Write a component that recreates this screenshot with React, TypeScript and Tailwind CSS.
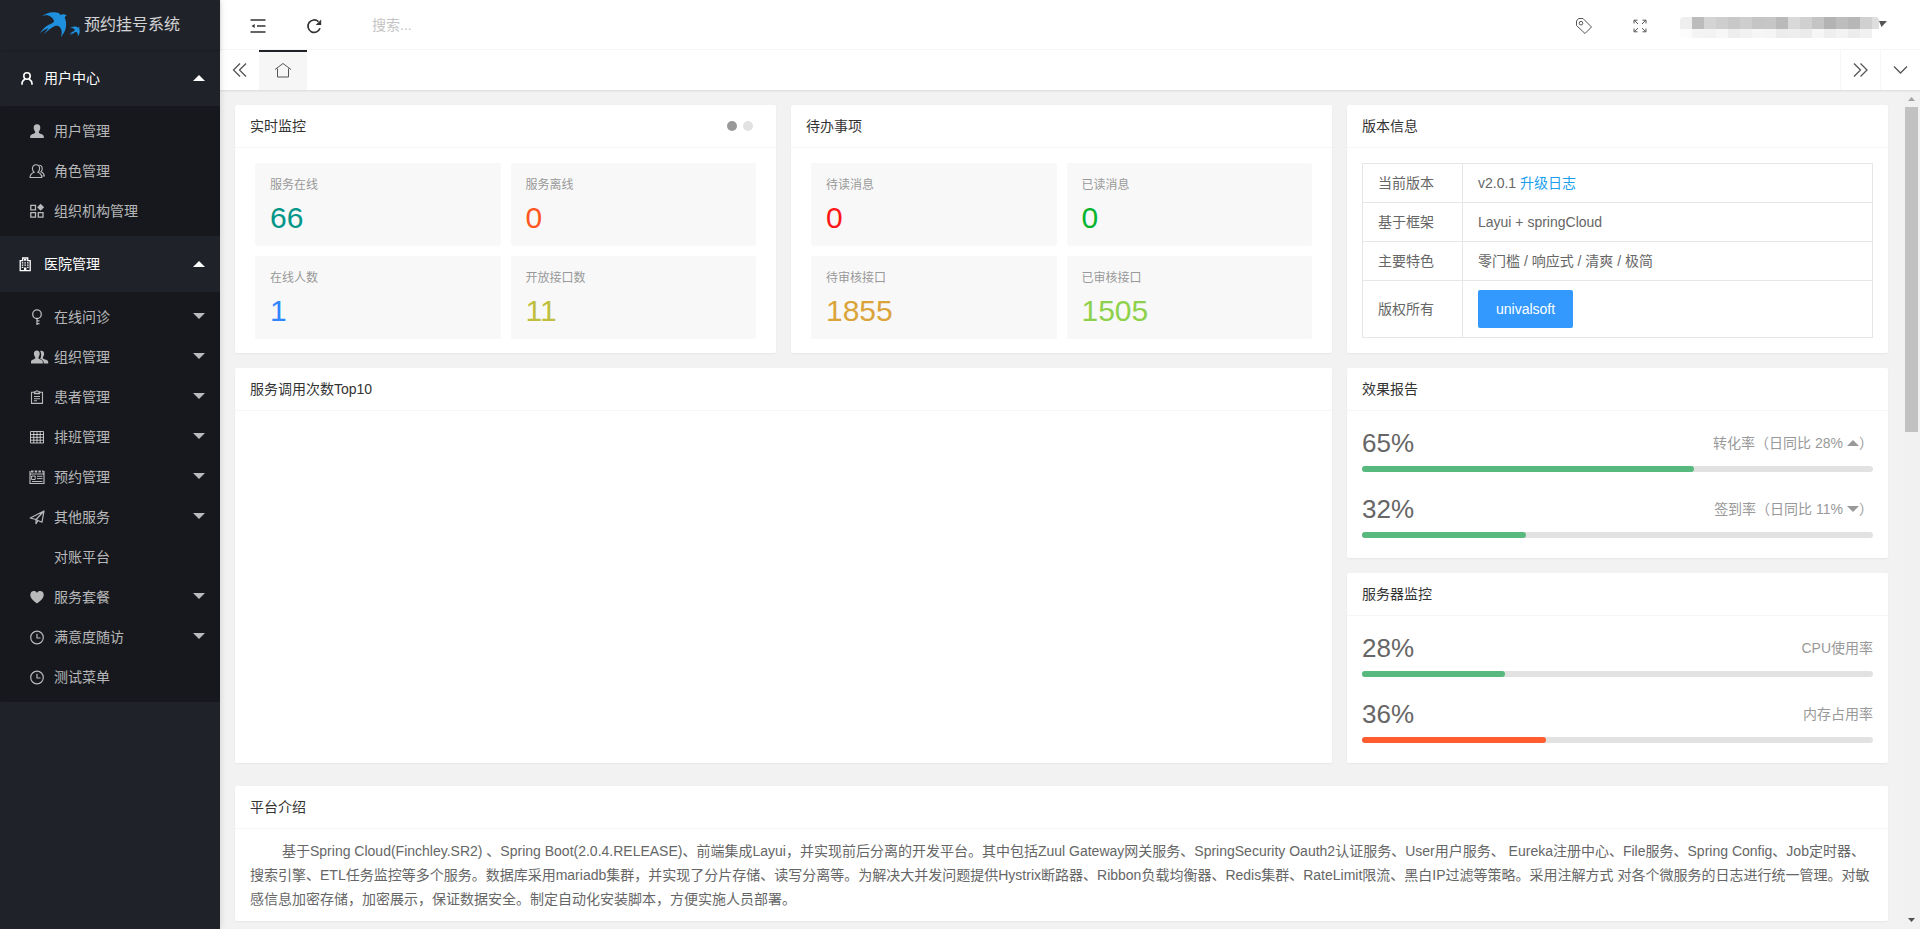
import type { ReactNode } from 'react';

const stroke = { fill: 'none', stroke: 'currentColor', strokeWidth: 1 } as const;

// All menu icons share a 16x16 grid
const icons: Record<string, ReactNode> = {
  person: (
    <g {...stroke} strokeWidth={1.6}>
      <circle cx="9" cy="6" r="3.2" />
      <path d="M4 14.800v-1.200q0-2.600 3-4.600M14 14.800v-1.200q0-2.600-3-4.600" />
    </g>
  ),
  hospital: (
    <g>
      <path {...stroke} strokeWidth={1.3} d="M2.200 14.600V4.600h2.500V2h5v2.600h2.500v10z" />
      <path fill="currentColor" d="M6 2.900h2.400v1.800H6zM3.800 6.200h1.500v1.300H3.800zM6.400 6.200h1.500v1.300H6.400zM9.100 6.200h1.500v1.300H9.100zM3.800 8.500h1.500v1.300H3.800zM6.400 8.500h1.500v1.300H6.400zM9.100 8.500h1.500v1.300H9.100zM3.800 10.800h1.500v1.300H3.800zM9.100 10.800h1.500v1.300H9.100zM6 11.600h2.400v3H6z" />
    </g>
  ),
  user: (
    <path fill="currentColor" d="M8 1.200c2.300 0 3.500 1.600 3.300 3.800-.1 1.600-.7 2.600-1.400 3.400v1.500c1.600 1 4.900 1.500 4.900 3.400V15H1.200v-1.700c0-1.900 3.300-2.400 4.900-3.400V8.400C5.400 7.600 4.800 6.600 4.700 5 4.500 2.800 5.700 1.200 8 1.200z" />
  ),
  role: (
    <g {...stroke} strokeWidth={1.1}>
      <path d="M7 1.800c2.200 0 3.600 1.500 3.600 3.800 0 1.700-.7 2.900-1.700 3.700 2 .8 3.900 2 3.900 5.200H1c0-3.200 2.100-4.400 4.100-5.200-1-.8-1.700-2-1.700-3.700 0-2.300 1.400-3.800 3.600-3.800z" />
      <path d="M10.400 2.200c1.700.2 2.900 1.500 2.800 3.600 0 1.300-.5 2.300-1.300 3 1.800.7 3.300 1.700 3.400 4.200h-2" />
    </g>
  ),
  blocks: (
    <g>
      <path {...stroke} strokeWidth={1.3} d="M1.800 2.300h4.700v4.500H1.800zM1.800 9.700h4.700v4.500H1.800zM9.300 9.700H14v4.500H9.300z" />
      <path fill="currentColor" d="M11.600.8l3.500 3.500-3.500 3.500-3.500-3.500z" />
    </g>
  ),
  key: (
    <g {...stroke} strokeWidth={1.3}>
      <circle cx="8" cy="5.200" r="4.300" />
      <path d="M8 9.500V16M8 11.800h2.500M8 14.600h2.500" />
    </g>
  ),
  group: (
    <g fill="currentColor">
      <path d="M7.800 1.600c2 0 3 1.400 2.900 3.400-.1 1.400-.6 2.400-1.200 3v1.600c1.500.9 4.300 1.400 4.300 3.200v1.700H2v-1.700c0-1.800 2.700-2.300 4.200-3.200V8c-.6-.6-1.200-1.600-1.300-3-.1-2 .9-3.400 2.900-3.400z" />
      <path d="M11.200 2c2.300-.6 4 .8 3.900 3-.1 1.400-.6 2.300-1.200 2.900v1.700c1.500.9 5.300 1.500 5.300 3.200v1.700h-4.500c.2-2.700-1.200-3.800-3.500-4.800 1.300-2.200 1.400-5.300 0-7.700z" />
    </g>
  ),
  clipboard: (
    <g {...stroke} strokeWidth={1.1}>
      <path d="M5 3.200H2.500v11.200h11V3.200H11" />
      <path d="M5.400 4.600V2.900h1.400a1.200 1.200 0 0 1 2.400 0h1.400v1.700zM5 7.500h6M5 9.700h6M5 11.800h3" />
    </g>
  ),
  grid: (
    <path {...stroke} d="M1.500 2.500h13v11.500h-13zM1.500 5.500h13M1.500 8.300h13M1.500 11.200h13M4.800 2.500V14M8 2.500V14M11.200 2.500V14" />
  ),
  card: (
    <g {...stroke}>
      <path strokeWidth={1.2} d="M1 2v12.500h14V2" />
      <path strokeWidth={2} strokeDasharray="2.500 1.200" d="M2 2.500h12.500" />
      <path d="M1 5h14M2.600 7h3.600v3.500H2.600zM8 7.300h5.500M8 9.600h5.500M3 12.500h10.500" />
    </g>
  ),
  plane: (
    <path {...stroke} strokeWidth={1.2} strokeLinejoin="round" d="M1.200 9L15 2l-2 11.200-4-1.700-2 3.200v-4.200L1.200 9zM7 10.500L15 2M9 11.500l-2-1" />
  ),
  heart: (
    <path fill="currentColor" d="M8 14.400C4.500 12 1.300 9 1.300 5.900c0-2.200 1.500-3.900 3.500-3.900C6.200 2 7.400 2.600 8 3.900 8.600 2.600 9.800 2 11.200 2c2 0 3.500 1.700 3.500 3.900 0 3.100-3.200 6.100-6.700 8.500z" />
  ),
  clock: (
    <g {...stroke} strokeWidth={1.2}>
      <circle cx="8" cy="8.500" r="6.300" />
      <path d="M8 4.700V9h3.500" />
    </g>
  ),
};

function MenuIcon({ name }: { name?: string }) {
  return (
    <svg viewBox="0 0 16 16" className="size-4 shrink-0 overflow-visible" aria-hidden="true">
      {name ? icons[name] : null}
    </svg>
  );
}

function Caret({ up = false, className = '' }: { up?: boolean; className?: string }) {
  return (
    <svg viewBox="0 0 12 6" className={`h-1.5 w-3 shrink-0 ${className}`} aria-hidden="true">
      <path fill="currentColor" d={up ? 'M0 6L6 0l6 6z' : 'M0 0h12L6 6z'} />
    </svg>
  );
}

const swallow =
  'M2 5.300C5 3 9 1.100 13.300 1.200c2.200 0 4.200.2 5.400.9.900.5 1.300 1.400 2 1.900.7-.6 1.600-.8 2.600-.7 1.300 0 2.400.6 3.400 1.400-1 .4-1.800 1-2 2.100.9 2.100 1.400 4 1.400 6.200 0 2.200-.1 3.800-.8 5.700-.9 2.600-2.600 5.200-4.600 7.600.8-2 1.200-3.900 1-5.600-.2-2.200-1.200-4.300-3-5.400-1.200-.5-2.500-.6-3.700-.3-1.800.7-3.400 1.800-5 3-2.200 1.600-4.200 3.200-6 5 1.200-2.100 2.900-4 4.600-5.900C5.700 18.200 2.800 20 0 22c2-2.800 4.300-5.300 7-7.300 2.400-1.300 5.200-2.200 7-4-.2-1.700-.8-3.100-2-4-1.400-1.300-3.300-2.200-5.300-2.700-1.600.2-3.200.7-4.700 1.300z';

function SwallowLogo() {
  return (
    <svg viewBox="0 0 42 28" className="h-7 w-[42px] shrink-0" fill="#1f90dd" aria-hidden="true">
      <path d={swallow} />
      <path transform="translate(29 15) scale(0.410)" d={swallow} />
    </svg>
  );
}

type MenuItem = { label: string; icon?: string; expandable?: boolean };

const menus: { title: string; icon: string; items: MenuItem[] }[] = [
  {
    title: '用户中心',
    icon: 'person',
    items: [
      { label: '用户管理', icon: 'user' },
      { label: '角色管理', icon: 'role' },
      { label: '组织机构管理', icon: 'blocks' },
    ],
  },
  {
    title: '医院管理',
    icon: 'hospital',
    items: [
      { label: '在线问诊', icon: 'key', expandable: true },
      { label: '组织管理', icon: 'group', expandable: true },
      { label: '患者管理', icon: 'clipboard', expandable: true },
      { label: '排班管理', icon: 'grid', expandable: true },
      { label: '预约管理', icon: 'card', expandable: true },
      { label: '其他服务', icon: 'plane', expandable: true },
      { label: '对账平台' },
      { label: '服务套餐', icon: 'heart', expandable: true },
      { label: '满意度随访', icon: 'clock', expandable: true },
      { label: '测试菜单', icon: 'clock' },
    ],
  },
];

function Sidebar() {
  return (
    <aside className="z-10 flex w-[220px] shrink-0 flex-col bg-[#20222a] shadow-[1px_0_6px_rgba(0,0,0,0.12)]">
      <div className="flex h-[50px] shrink-0 items-center justify-center gap-0.5 text-base text-white/80 shadow-[0_1px_2px_rgba(0,0,0,0.15)]">
        <SwallowLogo />
        <span>预约挂号系统</span>
      </div>
      <nav>
        {menus.map((menu) => (
          <div key={menu.title}>
            <a href="#" className="flex h-14 items-center pr-[15px] pl-[18px] text-white">
              <MenuIcon name={menu.icon} />
              <span className="ml-2.5 flex-1">{menu.title}</span>
              <Caret up />
            </a>
            <ul className="rounded-xs bg-[#16181d] py-[5px]">
              {menu.items.map((item) => (
                <li key={item.label}>
                  <a href="#" className="flex h-10 items-center pr-[15px] pl-[29px] text-white/70">
                    <MenuIcon name={item.icon} />
                    <span className="ml-[9px] flex-1">{item.label}</span>
                    {item.expandable && <Caret className="mb-0.5" />}
                  </a>
                </li>
              ))}
            </ul>
          </div>
        ))}
      </nav>
    </aside>
  );
}

const maskTop = ['#eeeeee', '#bcbcbc', '#d4d4d4', '#cecece', '#c8c8c8', '#cecece', '#c5c5c5', '#c6c6c6', '#bababa', '#d9d9d9', '#d0d0d0', '#c4c4c4', '#b3b3b3', '#bdbdbd', '#b7b7b7', '#d0d0d0', '#dedede'];
const maskBottom = ['#fcfcfc', '#f4f4f4', '#f3f3f3', '#f7f7f7', '#eeeeee', '#f2f2f2', '#f6f6f6', '#f5f5f5', '#ececec', '#eeeeee', '#ebebeb', '#f6f6f6', '#eeeeee', '#f3f3f3', '#ececec', '#f1f1f1'];

function MaskedName() {
  return (
    <svg viewBox="0 0 199 21" className="h-[21px] w-[199px] rounded-sm" shapeRendering="crispEdges" aria-hidden="true">
      {maskTop.map((fill, i) => (
        <rect key={i} x={i * 12} y="0" width={i === 16 ? 7 : 12} height="12" fill={fill} />
      ))}
      {maskBottom.map((fill, i) => (
        <rect key={i} x={i * 12} y="12" width="12" height="9" fill={fill} />
      ))}
    </svg>
  );
}

function Header() {
  return (
    <header className="flex h-[50px] shrink-0 items-center border-b border-[#f6f6f6] bg-white pl-[30px] text-[#333]">
      <button type="button" aria-label="侧边伸缩">
        <svg viewBox="0 0 16 16" className="mt-0.5 size-4" aria-hidden="true">
          <path {...stroke} strokeWidth={1.4} d="M.5 2h15M7 8h8.500M.5 14h15" />
          <path fill="currentColor" d="M1.500 8l3.200-2v4z" />
        </svg>
      </button>
      <button type="button" aria-label="刷新" className="ml-10">
        <svg viewBox="0 0 16 16" className="mt-0.5 size-4" aria-hidden="true">
          <path {...stroke} strokeWidth={1.7} d="M12.400 3.600A6.200 6.200 0 1 0 14 10.300" />
          <path fill="currentColor" d="M15.200 1.500v5.500H9.700z" />
        </svg>
      </button>
      <input
        type="text"
        placeholder="搜索..."
        aria-label="搜索"
        className="ml-[50px] h-8 w-40 bg-transparent outline-none placeholder:text-[#c4c4c4]"
      />
      <div className="ml-auto flex items-center pr-[33px] text-[#555]">
        <button type="button" aria-label="便签">
          <svg viewBox="0 0 18 18" className="mt-0.5 size-[18px]" aria-hidden="true">
            <path {...stroke} strokeLinejoin="round" d="M1.500 4l2-2.500H8L16.500 10l-6.500 6.500-8.500-8z" />
            <circle {...stroke} cx="6" cy="6.200" r="1.800" />
          </svg>
        </button>
        <button type="button" aria-label="全屏" className="ml-10">
          <svg viewBox="0 0 14 14" className="mt-0.5 size-3.5" aria-hidden="true">
            <path {...stroke} d="M1 4.500V1.200h3.500M1.200 1.200L5 5M9.500 1.200H13v3.300M12.800 1.200L9 5M1 9.500v3.300h3.500M1.200 12.800L5 9M9.500 12.800H13V9.500M12.800 12.800L9 9" />
          </svg>
        </button>
        <button type="button" aria-label="用户" className="mt-1.5 ml-[33px] flex items-center">
          <MaskedName />
          <svg viewBox="0 0 8 6" className="mb-2 h-1.5 w-2" aria-hidden="true">
            <path fill="currentColor" d="M0 0h8L2.500 6z" />
          </svg>
        </button>
      </div>
    </header>
  );
}

function Chevrons({ d }: { d: string }) {
  return (
    <svg viewBox="0 0 16 16" className="size-4" aria-hidden="true">
      <path {...stroke} strokeWidth={1.3} d={d} />
    </svg>
  );
}

function TabBar() {
  return (
    <div className="z-[5] flex h-10 shrink-0 bg-white text-[#555] shadow-[0_1px_2px_rgba(0,0,0,0.1)]">
      <button type="button" aria-label="向左" className="flex w-[39px] items-center justify-center">
        <Chevrons d="M8 1.500L1.500 8 8 14.500M14 1.500L7.500 8l6.500 6.500" />
      </button>
      <a href="#" aria-label="主页" className="flex w-12 items-center justify-center border-t-2 border-[#20222a] bg-[#f6f6f6]">
        <svg viewBox="0 0 16 16" className="size-4 overflow-visible" aria-hidden="true">
          <path {...stroke} d="M0 6.500L8 .5l8 6M2.500 5.500v8.500h11V5.500" />
        </svg>
      </a>
      <button type="button" aria-label="向右" className="ml-auto flex w-10 items-center justify-center border-l border-[#f6f6f6]">
        <Chevrons d="M1 1.500L7.500 8 1 14.500M7.500 1.500L14 8l-6.500 6.500" />
      </button>
      <button type="button" aria-label="更多" className="flex w-10 items-center justify-center border-l border-[#f6f6f6]">
        <Chevrons d="M1 4.500L7.500 11 14 4.500" />
      </button>
    </div>
  );
}

function Card({ title, extra, className = '', children }: { title: string; extra?: ReactNode; className?: string; children?: ReactNode }) {
  return (
    <section className={`rounded-xs bg-white shadow-[0_1px_2px_rgba(0,0,0,0.05)] ${className}`}>
      <div className="flex h-[43px] items-center justify-between border-b border-[#f6f6f6] px-[15px]">
        <h2 className="text-[#333]">{title}</h2>
        {extra}
      </div>
      {children}
    </section>
  );
}

type Stat = { label: string; value: string; color: string };

const monitorStats: Stat[] = [
  { label: '服务在线', value: '66', color: 'text-[#009688]' },
  { label: '服务离线', value: '0', color: 'text-[#ff5722]' },
  { label: '在线人数', value: '1', color: 'text-[#2f86ff]' },
  { label: '开放接口数', value: '11', color: 'text-[#bfbf3d]' },
];

const todoStats: Stat[] = [
  { label: '待读消息', value: '0', color: 'text-[#ff1616]' },
  { label: '已读消息', value: '0', color: 'text-[#05b52d]' },
  { label: '待审核接口', value: '1855', color: 'text-[#daa43a]' },
  { label: '已审核接口', value: '1505', color: 'text-[#8ed14b]' },
];

function StatGrid({ stats }: { stats: Stat[] }) {
  return (
    <div className="grid grid-cols-2 gap-2.5 px-5 pt-[15px] pb-3.5">
      {stats.map((stat) => (
        <a key={stat.label} href="#" className="block h-[83px] rounded-xs bg-[#f8f8f8] px-[15px] pt-2.5">
          <h3 className="text-xs leading-6 text-[#999]">{stat.label}</h3>
          <p className={`text-[30px] leading-[42px] ${stat.color}`}>{stat.value}</p>
        </a>
      ))}
    </div>
  );
}

const versionRows: { name: string; value: ReactNode }[] = [
  { name: '当前版本', value: <>v2.0.1 <a href="#" className="text-[#1a9fee]">升级日志</a></> },
  { name: '基于框架', value: 'Layui + springCloud' },
  { name: '主要特色', value: '零门槛 / 响应式 / 清爽 / 极简' },
  {
    name: '版权所有',
    value: (
      <button type="button" className="block h-[38px] rounded-xs bg-[#3399ff] px-[18px] text-white">
        univalsoft
      </button>
    ),
  },
];

function VersionTable() {
  return (
    <div className="px-[15px] pt-[15px] pb-3.5">
      <table className="w-full border-collapse text-left leading-5 text-[#666]">
        <tbody>
          {versionRows.map((row) => (
            <tr key={row.name}>
              <th scope="row" className="w-[100px] border border-[#e6e6e6] px-[15px] py-[9px] font-normal">{row.name}</th>
              <td className="border border-[#e6e6e6] px-[15px] py-[9px]">{row.value}</td>
            </tr>
          ))}
        </tbody>
      </table>
    </div>
  );
}

function ProgressRow({ percent, color, children }: { percent: number; color: string; children: ReactNode }) {
  return (
    <div>
      <div className="mb-1.5 flex h-[34px] items-center justify-between">
        <span className="text-[26px] text-[#666]">{percent}%</span>
        <span className="flex items-center text-[#999]">{children}</span>
      </div>
      <div className="h-1.5 rounded-full bg-[#e2e2e2]">
        <div className={`h-1.5 rounded-full ${color}`} style={{ width: `${percent}%` }} />
      </div>
    </div>
  );
}

function Scrollbar() {
  return (
    <div className="flex w-[17px] shrink-0 flex-col items-center bg-[#f1f1f1]" aria-hidden="true">
      <svg viewBox="0 0 17 17" className="size-[17px] shrink-0">
        <path fill="#a3a3a3" d="M5 11l3.500-4 3.500 4z" />
      </svg>
      <div className="h-[325px] w-[13px] bg-[#c1c1c1]" />
      <svg viewBox="0 0 17 17" className="mt-auto size-[17px] shrink-0">
        <path fill="#505050" d="M5 6l3.500 4L12 6z" />
      </svg>
    </div>
  );
}

export default function App() {
  return (
    <div className="flex h-screen overflow-hidden bg-[#f2f2f2] font-['Liberation_Sans','Noto_Sans_CJK_SC',sans-serif] text-sm leading-6">
      <Sidebar />
      <div className="flex min-w-0 flex-1 flex-col">
        <Header />
        <TabBar />
        <div className="flex min-h-0 flex-1">
          <main className="min-w-0 flex-1 overflow-hidden p-[15px]">
            <div className="grid grid-cols-3 gap-[15px]">
              <Card
                title="实时监控"
                extra={
                  <div className="flex gap-1.5 pr-2">
                    <button type="button" aria-label="第一页" className="size-2.5 rounded-full bg-[#999]" />
                    <button type="button" aria-label="第二页" className="size-2.5 rounded-full bg-[#e2e2e2]" />
                  </div>
                }
              >
                <StatGrid stats={monitorStats} />
              </Card>
              <Card title="待办事项">
                <StatGrid stats={todoStats} />
              </Card>
              <Card title="版本信息">
                <VersionTable />
              </Card>

              <Card title="服务调用次数Top10" className="col-span-2" />
              <div className="flex flex-col gap-[15px]">
                <Card title="效果报告">
                  <div className="flex flex-col gap-5 px-[15px] pt-[15px] pb-5">
                    <ProgressRow percent={65} color="bg-[#57b97d]">
                      转化率（日同比 28% <Caret up className="ml-1" />）
                    </ProgressRow>
                    <ProgressRow percent={32} color="bg-[#57b97d]">
                      签到率（日同比 11% <Caret className="ml-1" />）
                    </ProgressRow>
                  </div>
                </Card>
                <Card title="服务器监控">
                  <div className="flex flex-col gap-5 px-[15px] pt-[15px] pb-5">
                    <ProgressRow percent={28} color="bg-[#57b97d]">CPU使用率</ProgressRow>
                    <ProgressRow percent={36} color="bg-[#ff5c30]">内存占用率</ProgressRow>
                  </div>
                </Card>
              </div>
            </div>

            <Card title="平台介绍" className="mt-[23px]">
              <p className="px-[15px] py-2.5 indent-8 text-[#666]">
                基于Spring Cloud(Finchley.SR2) 、Spring Boot(2.0.4.RELEASE)、前端集成Layui，并实现前后分离的开发平台。其中包括Zuul Gateway网关服务、SpringSecurity Oauth2认证服务、User用户服务、 Eureka注册中心、File服务、Spring Config、Job定时器、搜索引擎、ETL任务监控等多个服务。数据库采用mariadb集群，并实现了分片存储、读写分离等。为解决大并发问题提供Hystrix断路器、Ribbon负载均衡器、Redis集群、RateLimit限流、黑白IP过滤等策略。采用注解方式 对各个微服务的日志进行统一管理。对敏感信息加密存储，加密展示，保证数据安全。制定自动化安装脚本，方便实施人员部署。
              </p>
            </Card>
          </main>
          <Scrollbar />
        </div>
      </div>
    </div>
  );
}
